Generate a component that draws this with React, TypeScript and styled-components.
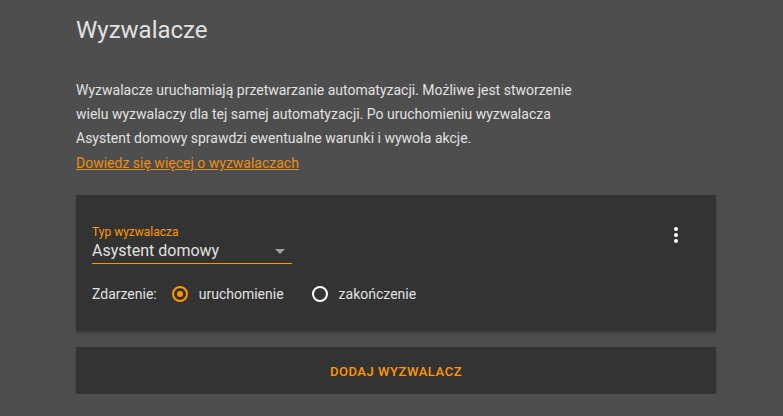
import React from "react";
import styled, { createGlobalStyle } from "styled-components";

const Global = createGlobalStyle`
  html, body { margin: 0; padding: 0; background: #4e4e4e; }
  body { font-family: Roboto, "Noto Sans", sans-serif; color: #e1e1e1; }
`;

const Page = styled.div`
  width: 640px;
  padding: 0 0 0 76px;
  display: flex;
  flex-direction: column;
`;

const Title = styled.h1`
  margin: 0;
  padding-top: 14px;
  font-size: 24px;
  font-weight: 400;
  line-height: 32px;
  color: #e1e1e1;
`;

const Intro = styled.p`
  margin: 32px 0 0 0;
  font-size: 14px;
  line-height: 24px;
  color: #e1e1e1;
  width: 520px;
`;

const Link = styled.a`
  display: inline-block;
  margin-top: 1px;
  color: #ec8d0c;
  text-decoration: underline;
  cursor: pointer;
`;

const Card = styled.div`
  background: #333333;
  border-radius: 2px;
  box-shadow: 0 2px 2px rgba(0,0,0,0.14), 0 1px 5px rgba(0,0,0,0.12);
`;

const TriggerCard = styled(Card)`
  margin-top: 20px;
  height: 136px;
  padding: 16px;
  box-sizing: border-box;
  position: relative;
`;

const SelectField = styled.div`
  width: 200px;
  height: 53px;
  border-bottom: 1px solid #ff9800;
  display: flex;
  flex-direction: column;
  justify-content: flex-end;
  box-sizing: border-box;
`;

const FloatLabel = styled.div`
  font-size: 12px;
  line-height: 14px;
  color: #ff9800;
  margin-bottom: 2px;
`;

const SelectValue = styled.div`
  font-size: 16px;
  line-height: 20px;
  color: #e1e1e1;
  padding-bottom: 2px;
  display: flex;
  justify-content: space-between;
  align-items: center;
`;

const Caret = styled.span`
  width: 0;
  height: 0;
  border-left: 5px solid transparent;
  border-right: 5px solid transparent;
  border-top: 5px solid #a0a0a0;
  margin-right: 7px;
`;

const RadioRow = styled.div`
  display: flex;
  align-items: center;
  margin-top: 22px;
  font-size: 14px;
  color: #e1e1e1;
`;

const RowLabel = styled.span`
  margin-right: 15px;
`;

const RadioItem = styled.label`
  display: flex;
  align-items: center;
  margin-right: 28px;
`;

const RadioCircle = styled.span<{ $on?: boolean }>`
  width: 12px;
  height: 12px;
  border-radius: 50%;
  border: 2px solid ${(p) => (p.$on ? "#ff9800" : "#ffffff")};
  display: flex;
  align-items: center;
  justify-content: center;
  margin-right: 11px;
  &::after {
    content: "";
    width: 6px;
    height: 6px;
    border-radius: 50%;
    background: ${(p) => (p.$on ? "#ff9800" : "transparent")};
  }
`;

const Menu = styled.div`
  position: absolute;
  top: 32px;
  right: 38px;
  display: flex;
  flex-direction: column;
  gap: 2px;
`;

const Dot = styled.span`
  width: 4px;
  height: 4px;
  background: #fff;
  border-radius: 50%;
`;

const AddCard = styled(Card)`
  margin-top: 16px;
  height: 47px;
  display: flex;
  align-items: center;
  justify-content: center;
`;

const AddButton = styled.span`
  font-size: 13px;
  font-weight: 500;
  letter-spacing: 0.55px;
  color: #ff9800;
  text-transform: uppercase;
  margin-top: 2px;
`;

export default function App() {
  return (
    <>
      <Global />
      <Page>
        <Title>Wyzwalacze</Title>
        <Intro>
          Wyzwalacze uruchamiają przetwarzanie automatyzacji. Możliwe jest stworzenie
          wielu wyzwalaczy dla tej samej automatyzacji. Po uruchomieniu wyzwalacza
          Asystent domowy sprawdzi ewentualne warunki i wywoła akcje.
          <br />
          <Link>Dowiedz się więcej o wyzwalaczach</Link>
        </Intro>
        <TriggerCard>
          <SelectField>
            <FloatLabel>Typ wyzwalacza</FloatLabel>
            <SelectValue>
              Asystent domowy
              <Caret />
            </SelectValue>
          </SelectField>
          <RadioRow>
            <RowLabel>Zdarzenie:</RowLabel>
            <RadioItem>
              <RadioCircle $on />
              uruchomienie
            </RadioItem>
            <RadioItem>
              <RadioCircle />
              zakończenie
            </RadioItem>
          </RadioRow>
          <Menu>
            <Dot />
            <Dot />
            <Dot />
          </Menu>
        </TriggerCard>
        <AddCard>
          <AddButton>Dodaj wyzwalacz</AddButton>
        </AddCard>
      </Page>
    </>
  );
}
